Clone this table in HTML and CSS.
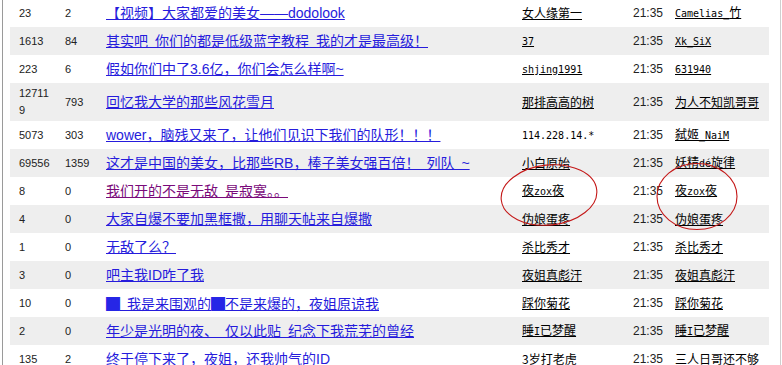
FILE: index.html
```html
<!DOCTYPE html>
<html lang="zh-CN">
<head>
<meta charset="utf-8">
<title>帖子列表</title>
<link rel="stylesheet" href="styles.css">
</head>
<body>
<div class="frame">
  <table class="threads">
    <colgroup>
      <col class="c-reply"><col class="c-view"><col class="c-title"><col class="c-author"><col class="c-time"><col class="c-last">
    </colgroup>
    <tbody>
      <tr><td class="num">23</td><td class="num">2</td><td class="title"><a href="#">【视频】大家都爱的美女——dodolook</a></td><td class="author"><a href="#">女人缘第一</a></td><td class="time">21:35</td><td class="author"><a href="#"><span class="en">Camelias_</span>竹</a></td></tr>
      <tr class="alt"><td class="num">1613</td><td class="num">84</td><td class="title"><a href="#">其实吧&ensp;你们的都是低级蓝字教程&ensp;我的才是最高级！</a></td><td class="author"><a href="#"><span class="en">37</span></a></td><td class="time">21:35</td><td class="author"><a href="#"><span class="en">Xk_SiX</span></a></td></tr>
      <tr><td class="num">223</td><td class="num">6</td><td class="title"><a href="#">假如你们中了3.6亿，你们会怎么样啊~</a></td><td class="author"><a href="#"><span class="en">shjing1991</span></a></td><td class="time">21:35</td><td class="author"><a href="#"><span class="en">631940</span></a></td></tr>
      <tr class="alt"><td class="num">127119</td><td class="num">793</td><td class="title"><a href="#">回忆我大学的那些风花雪月</a></td><td class="author"><a href="#">那排高高的树</a></td><td class="time">21:35</td><td class="author"><a href="#">为人不知凯哥哥</a></td></tr>
      <tr><td class="num">5073</td><td class="num">303</td><td class="title"><a href="#">wower，脑残又来了，让他们见识下我们的队形！！！</a></td><td class="author"><span class="en">114.228.14.*</span></td><td class="time">21:35</td><td class="author"><a href="#">弑姬<span class="en">_NaiM</span></a></td></tr>
      <tr class="alt"><td class="num">69556</td><td class="num">1359</td><td class="title"><a href="#">这才是中国的美女，比那些RB，棒子美女强百倍！&ensp;列队&ensp;~</a></td><td class="author"><a href="#">小白原始</a></td><td class="time">21:35</td><td class="author"><a href="#">妖精<span class="en">dé</span>旋律</a></td></tr>
      <tr><td class="num">8</td><td class="num">0</td><td class="title"><a href="#" class="visited">我们开的不是无敌&ensp;是寂寞。。</a></td><td class="author"><a href="#">夜<span class="en">zox</span>夜</a></td><td class="time">21:35</td><td class="author"><a href="#">夜<span class="en">zox</span>夜</a></td></tr>
      <tr class="alt"><td class="num">4</td><td class="num">0</td><td class="title"><a href="#">大家自爆不要加黑框撒，用聊天帖来自爆撒</a></td><td class="author"><a href="#">伪娘蛋疼</a></td><td class="time">21:35</td><td class="author"><a href="#">伪娘蛋疼</a></td></tr>
      <tr><td class="num">1</td><td class="num">0</td><td class="title"><a href="#">无敌了么？</a></td><td class="author"><a href="#">杀比秀才</a></td><td class="time">21:35</td><td class="author"><a href="#">杀比秀才</a></td></tr>
      <tr class="alt"><td class="num">3</td><td class="num">0</td><td class="title"><a href="#">吧主我ID咋了我</a></td><td class="author"><a href="#">夜姐真彪汗</a></td><td class="time">21:35</td><td class="author"><a href="#">夜姐真彪汗</a></td></tr>
      <tr><td class="num">10</td><td class="num">0</td><td class="title"><a href="#"><span class="blk">█</span>&ensp;我是来围观的<span class="blk">█</span>不是来爆的，夜姐原谅我</a></td><td class="author"><a href="#">踩你菊花</a></td><td class="time">21:35</td><td class="author"><a href="#">踩你菊花</a></td></tr>
      <tr class="alt"><td class="num">2</td><td class="num">0</td><td class="title"><a href="#">年少是光明的夜、&ensp;仅以此贴&ensp;纪念下我荒芜的曾经</a></td><td class="author"><a href="#">睡<span class="en">I</span>已梦醒</a></td><td class="time">21:35</td><td class="author"><a href="#">睡<span class="en">I</span>已梦醒</a></td></tr>
      <tr><td class="num">135</td><td class="num">2</td><td class="title"><a href="#">终于停下来了，夜姐，还我帅气的ID</a></td><td class="author"><a href="#">3岁打老虎</a></td><td class="time">21:35</td><td class="author"><a href="#">三人日哥还不够</a></td></tr>
    </tbody>
  </table>
</div>
<svg class="marks" width="782" height="365" viewBox="0 0 782 365" aria-hidden="true">
  <ellipse cx="549" cy="195" rx="48" ry="30" transform="rotate(-6 549 195)"/>
  <ellipse cx="697" cy="196.5" rx="40" ry="33"/>
</svg>
</body>
</html>
```

FILE: styles.css
```css
html, body {
  margin: 0;
  padding: 0;
  background: #fff;
}
body {
  position: relative;
  width: 782px;
  height: 365px;
  overflow: hidden;
  font-family: "Liberation Sans", "Noto Sans CJK SC", sans-serif;
  text-autospace: no-autospace;
}
.frame {
  box-sizing: border-box;
  margin-left: 2px;
  width: 779px;
  min-height: 365px;
  border-left: 1px solid #9a9a9a;
  border-right: 1px solid #cfcfcf;
  padding-left: 7px;
}
.threads {
  margin-top: -1px;
  width: 759px;
  table-layout: fixed;
  border-collapse: collapse;
  border-spacing: 0;
}
.c-reply { width: 46px; }
.c-view { width: 41px; }
.c-title { width: 416px; }
.c-author { width: 111px; }
.c-time { width: 42px; }
.c-last { width: 103px; }

.threads tr { height: 28px; }
.threads tr.alt { background: #eeeeee; }
.threads td {
  padding: 2px 0 2px 9px;
  vertical-align: middle;
  white-space: nowrap;
  overflow: hidden;
}
.num {
  font-family: "Liberation Sans", sans-serif;
  font-size: 11px;
  line-height: 17px;
  color: #222;
}
.threads td.num {
  white-space: normal;
  word-break: break-all;
  padding-right: 5px;
}
.time {
  font-family: "Liberation Sans", sans-serif;
  font-size: 12px;
  color: #222;
}
.title {
  font-family: "Liberation Sans", "Noto Sans CJK SC", sans-serif;
  font-size: 14px;
  line-height: 18px;
  letter-spacing: 0;
  word-spacing: 0;
}
.title a {
  color: #261cdc;
  text-decoration: underline;
}
.title a.visited {
  color: #7a0a7a;
}
.blk {
  color: #2626e6;
  font-family: "Noto Sans CJK SC", sans-serif;
}
.author {
  font-family: "Noto Sans CJK SC", sans-serif;
  font-size: 12px;
  line-height: 16px;
  color: #000;
}
.author a {
  color: #000;
  text-decoration: underline;
}
.en {
  font-family: "DejaVu Sans Mono", monospace;
  font-size: 10px;
}
.marks {
  position: absolute;
  top: 0;
  left: 0;
  pointer-events: none;
}
.marks ellipse {
  fill: none;
  stroke: #c41818;
  stroke-width: 1.1;
}
```
